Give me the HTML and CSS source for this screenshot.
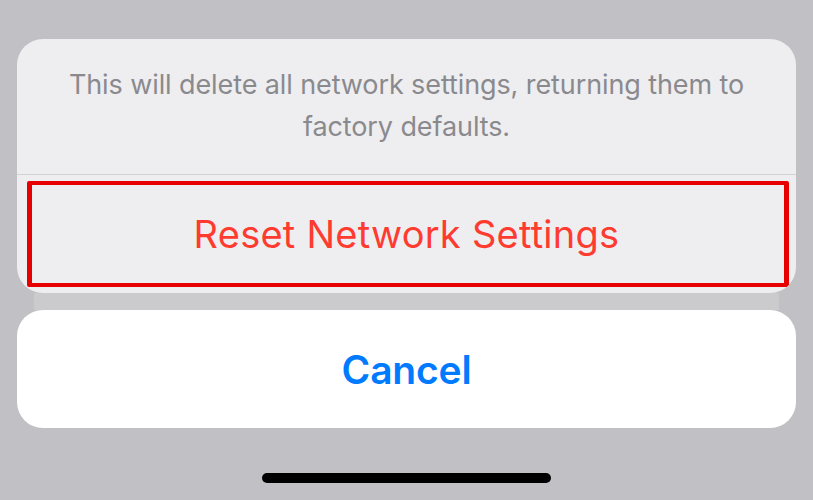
FILE: index.html
```html
<!DOCTYPE html>
<html lang="en">
<head>
<meta charset="utf-8">
<title>Reset Network Settings</title>
<link rel="stylesheet" href="styles.css">
</head>
<body>
<div class="sheet">
  <div class="card action-group">
    <p class="message">This will delete all network settings, returning them to factory defaults.</p>
    <div class="divider"></div>
    <div class="action destructive">
      <span>Reset Network Settings</span>
      <div class="highlight"></div>
    </div>
  </div>
  <div class="gap-band"></div>
  <div class="card cancel">
    <span>Cancel</span>
  </div>
  <div class="home-row">
    <div class="home-indicator"></div>
  </div>
</div>
</body>
</html>
```

FILE: styles.css
```css
html, body {
  margin: 0;
  padding: 0;
}

body {
  width: 813px;
  height: 500px;
  overflow: hidden;
  background: #c1c0c5;
  font-family: Inter, "Noto Sans", "Liberation Sans", sans-serif;
}

.sheet {
  padding: 39px 17px 0;
  display: flex;
  flex-direction: column;
}

.card {
  border-radius: 26px;
  overflow: hidden;
}

.action-group {
  background: #eeeef0;
  display: flex;
  flex-direction: column;
}

.message {
  margin: 0;
  padding: 25px 50px 26px;
  text-align: center;
  font-size: 27px;
  line-height: 42px;
  color: #8a8a8e;
  letter-spacing: -0.1px;
}

.divider {
  height: 1px;
  background: #d2d2d6;
}

.action {
  position: relative;
  height: 118px;
  display: flex;
  align-items: center;
  justify-content: center;
}

.destructive span {
  font-size: 38px;
  color: #ff3b30;
  letter-spacing: 0.25px;
}

.highlight {
  position: absolute;
  left: 10px;
  right: 7px;
  top: 6px;
  bottom: 6px;
  border: 5px solid #e60000;
  border-width: 4px 5px;
  border-radius: 2px;
}

.gap-band {
  height: 17px;
  margin: 0 17px;
  background: #cbcbcd;
}

.cancel {
  background: #ffffff;
  height: 118px;
  display: flex;
  align-items: center;
  justify-content: center;
}

.cancel span {
  font-size: 39px;
  font-weight: 600;
  color: #007aff;
  letter-spacing: -0.2px;
}

.home-row {
  display: flex;
  justify-content: center;
  padding-top: 45px;
}

.home-indicator {
  width: 289px;
  height: 10px;
  border-radius: 5px;
  background: #000000;
}
```
